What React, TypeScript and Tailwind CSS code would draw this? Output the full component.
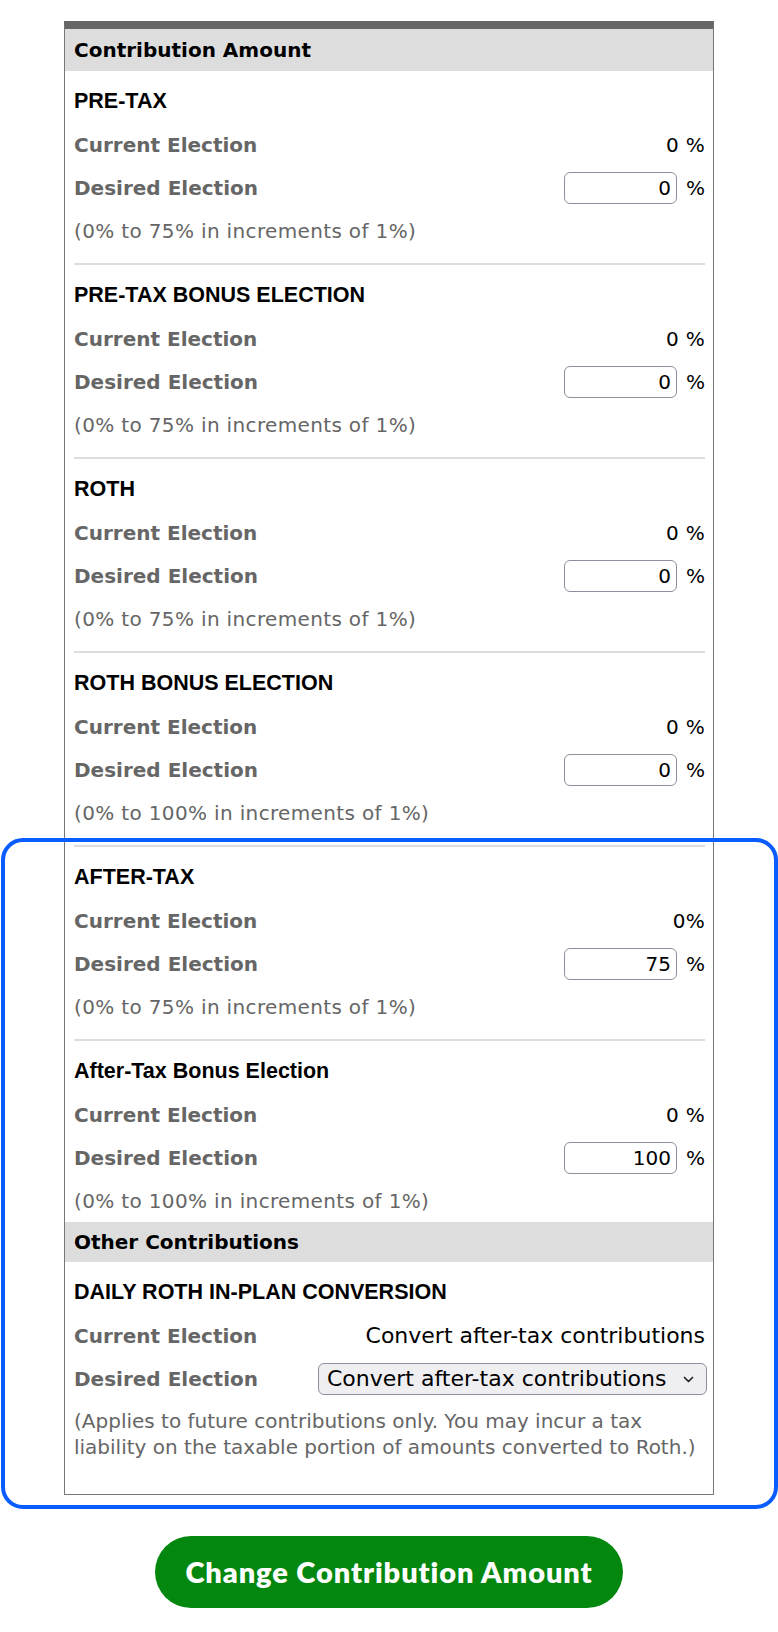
import React, { useState } from 'react';

interface Election {
  title: string;
  current: string;
  desired: string;
  note: string;
}

const elections: Election[] = [
  { title: 'PRE-TAX', current: '0 %', desired: '0', note: '(0% to 75% in increments of 1%)' },
  { title: 'PRE-TAX BONUS ELECTION', current: '0 %', desired: '0', note: '(0% to 75% in increments of 1%)' },
  { title: 'ROTH', current: '0 %', desired: '0', note: '(0% to 75% in increments of 1%)' },
  { title: 'ROTH BONUS ELECTION', current: '0 %', desired: '0', note: '(0% to 100% in increments of 1%)' },
  { title: 'AFTER-TAX', current: '0%', desired: '75', note: '(0% to 75% in increments of 1%)' },
  { title: 'After-Tax Bonus Election', current: '0 %', desired: '100', note: '(0% to 100% in increments of 1%)' },
];

const verdana = "font-['DejaVu_Sans',Verdana,sans-serif]";

const Title: React.FC<{ children: React.ReactNode }> = ({ children }) => (
  <div className="h-[43px] flex items-center font-['Liberation_Sans',Arial,sans-serif] font-bold text-[21.5px] text-black">
    {children}
  </div>
);

const Label: React.FC<{ children: React.ReactNode }> = ({ children }) => (
  <span className={`${verdana} font-bold text-[20px] text-[#666]`}>{children}</span>
);

const ElectionBlock: React.FC<{ item: Election; first: boolean; last: boolean }> = ({ item, first, last }) => {
  const [value, setValue] = useState(item.desired);

  return (
    <div className={`${first ? '' : 'border-t-2 border-[#ddd]'} pt-[9px] ${last ? '' : 'pb-[11px]'}`}>
      <Title>{item.title}</Title>
      <div className="h-[43px] flex items-center justify-between">
        <Label>Current Election</Label>
        <span className={`${verdana} text-[20px] tracking-[0.3px] text-black`}>{item.current}</span>
      </div>
      <div className="h-[43px] flex items-center justify-between">
        <Label>Desired Election</Label>
        <div className="flex items-center gap-[9px]">
          <input
            value={value}
            onChange={(e) => setValue(e.target.value)}
            className={`${verdana} w-[113px] h-[32px] rounded-[6px] border border-[#8f8f9d] bg-white text-right pr-[5px] text-[20px] text-black outline-none`}
          />
          <span className={`${verdana} text-[20px] text-black`}>%</span>
        </div>
      </div>
      <div className={`h-[43px] flex items-center ${verdana} text-[20px] tracking-[0.35px] text-[#666]`}>{item.note}</div>
    </div>
  );
};

export default function App() {
  const [conversion, setConversion] = useState('convert');

  return (
    <div className="relative min-h-[1632px] bg-white pt-[21px]">
      <div className="mx-auto w-[650px] border-x border-b border-[#777] border-t-[8px] border-t-[#666]">
        {/* Header */}
        <div className={`h-[42px] flex items-center bg-[#ddd] pl-[9px] ${verdana} font-bold text-[20px] text-black`}>
          Contribution Amount
        </div>

        <div className="pl-[9px] pr-[8px]">
          {elections.map((item, i) => (
            <ElectionBlock key={item.title} item={item} first={i === 0} last={i === elections.length - 1} />
          ))}
        </div>

        {/* Other contributions */}
        <div className={`h-[40px] flex items-center bg-[#ddd] pl-[9px] ${verdana} font-bold text-[20px] text-black`}>
          Other Contributions
        </div>

        <div className="pl-[9px] pr-[6px] pt-[9px] pb-[34px]">
          <Title>DAILY ROTH IN-PLAN CONVERSION</Title>
          <div className="h-[43px] flex items-center justify-between pr-[2px]">
            <Label>Current Election</Label>
            <span className={`${verdana} text-[22px] text-black`}>Convert after-tax contributions</span>
          </div>
          <div className="h-[43px] flex items-center justify-between">
            <Label>Desired Election</Label>
            <div className="relative">
              <select
                value={conversion}
                onChange={(e) => setConversion(e.target.value)}
                className={`${verdana} appearance-none w-[389px] h-[32px] rounded-[6px] border border-[#8f8f9d] bg-[#efeff2] pl-[8px] pr-[30px] text-[22px] leading-[28px] text-black outline-none`}
              >
                <option value="convert">Convert after-tax contributions</option>
                <option value="none">Do not convert</option>
              </select>
              <svg
                className="pointer-events-none absolute right-[13px] top-[13px]"
                width="11"
                height="7"
                viewBox="0 0 11 7"
                fill="none"
              >
                <path d="M1.5 1.5 L5.5 5.5 L9.5 1.5" stroke="#222" strokeWidth="1.7" strokeLinecap="round" strokeLinejoin="round" />
              </svg>
            </div>
          </div>
          <p className={`pt-[8px] ${verdana} text-[20px] leading-[26px] text-[#666]`}>
            (Applies to future contributions only. You may incur a tax
            <br />
            liability on the taxable portion of amounts converted to Roth.)
          </p>
        </div>
      </div>

      <div className="flex justify-center mt-[41px]">
        <button className="w-[468px] h-[72px] rounded-full bg-[#04870e] text-white font-['Lato',sans-serif] font-extrabold text-[29px] tracking-[0.9px]">
          Change Contribution Amount
        </button>
      </div>

      {/* highlight around the after-tax area */}
      <div className="pointer-events-none absolute left-[1px] top-[838px] w-[777px] h-[671px] rounded-[22px] border-[4px] border-[#0a5cff]" />
    </div>
  );
}
